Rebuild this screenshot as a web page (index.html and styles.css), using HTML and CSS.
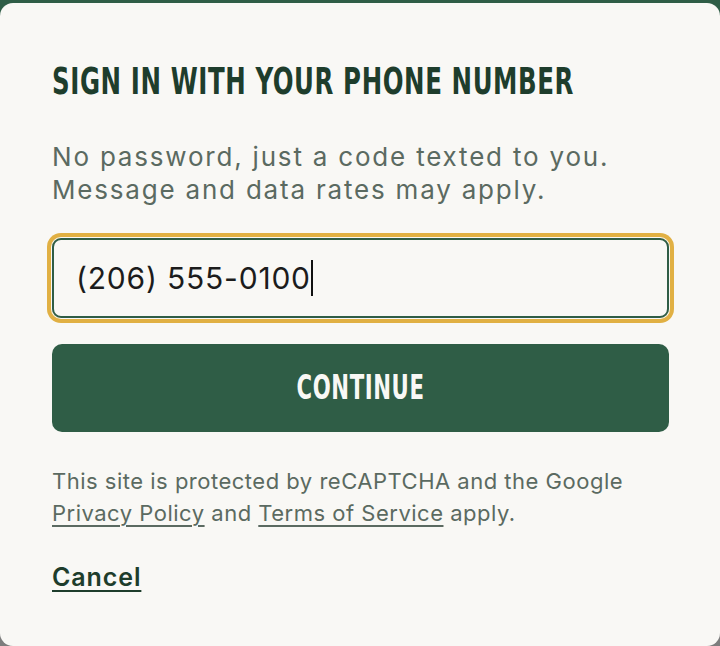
FILE: index.html
```html
<!DOCTYPE html>
<html lang="en">
<head>
<meta charset="utf-8">
<title>Sign in</title>
<link rel="stylesheet" href="styles.css">
</head>
<body>
<div class="backdrop">
  <main class="card">
    <h1 class="title"><span class="title-text">SIGN IN WITH YOUR PHONE NUMBER</span></h1>
    <p class="lead">No password, just a code texted to you.<br>Message and data rates may apply.</p>
    <div class="field">
      <span class="field-value">(206) 555-0100</span><span class="caret"></span>
    </div>
    <button class="primary" type="button"><span class="btn-text">CONTINUE</span></button>
    <p class="legal">This site is protected by reCAPTCHA and the Google<br><a href="#" class="legal-link">Privacy Policy</a> and <a href="#" class="legal-link">Terms of Service</a> apply.</p>
    <a href="#" class="cancel">Cancel</a>
  </main>
</div>
</body>
</html>
```

FILE: styles.css
```css
html, body {
  margin: 0;
  padding: 0;
  height: 100%;
}
body {
  background: linear-gradient(#2f5d46 0 24px, #7d7d7d 24px);
  overflow: hidden;
}
.backdrop {
  padding-top: 3px;
  height: 643px;
}
.card {
  box-sizing: border-box;
  height: 643px;
  background: #f9f8f5;
  border-radius: 13px;
  padding: 61px 51px 0 52px;
  font-family: Inter, "Noto Sans", sans-serif;
}
.title {
  margin: 0;
  height: 38px;
  font-family: "DejaVu Sans Condensed", "DejaVu Sans", sans-serif;
  font-weight: 700;
  font-size: 27.2px;
  line-height: 38px;
  color: #1e3d2c;
  letter-spacing: 0.6px;
  white-space: nowrap;
}
.title-text {
  display: inline-block;
  line-height: 38px;
  transform-origin: center 60%;
  transform: scaleY(1.39);
}
.lead {
  margin: 38px 0 0;
  font-size: 26px;
  line-height: 33px;
  letter-spacing: 1.8px;
  color: #5b6a61;
}
.field {
  box-sizing: border-box;
  margin-top: 32px;
  height: 80px;
  border: 2px solid #2f5d46;
  border-radius: 9px;
  box-shadow: 0 0 0 1px #f9f8f5, 0 0 0 5px #e1b043;
  display: flex;
  align-items: center;
  padding-left: 22px;
  font-size: 30px;
  letter-spacing: 0.8px;
  color: #1c1c1c;
}
.caret {
  display: inline-block;
  width: 2px;
  height: 36px;
  background: #111;
}
.primary {
  display: flex;
  align-items: center;
  justify-content: center;
  width: 100%;
  height: 88px;
  margin-top: 26px;
  border: 0;
  border-radius: 10px;
  background: #2f5d46;
  color: #f9f8f5;
  font-family: "DejaVu Sans Condensed", "DejaVu Sans", sans-serif;
  font-weight: 700;
  font-size: 23.6px;
  letter-spacing: 0.6px;
  padding: 0;
}
.btn-text {
  display: inline-block;
  transform: scaleY(1.4);
}
.legal {
  margin: 33px 0 0;
  font-size: 22px;
  line-height: 32px;
  letter-spacing: 0.5px;
  color: #5b6a61;
}
.legal-link {
  color: #5b6a61;
  text-decoration: underline;
  text-underline-offset: 4px;
  text-decoration-thickness: 1.5px;
}
.cancel {
  display: inline-block;
  margin-top: 33px;
  font-size: 25px;
  font-weight: 600;
  letter-spacing: 0.9px;
  color: #1e3d2c;
  text-decoration: underline;
  text-underline-offset: 4px;
  text-decoration-thickness: 2px;
}
```
